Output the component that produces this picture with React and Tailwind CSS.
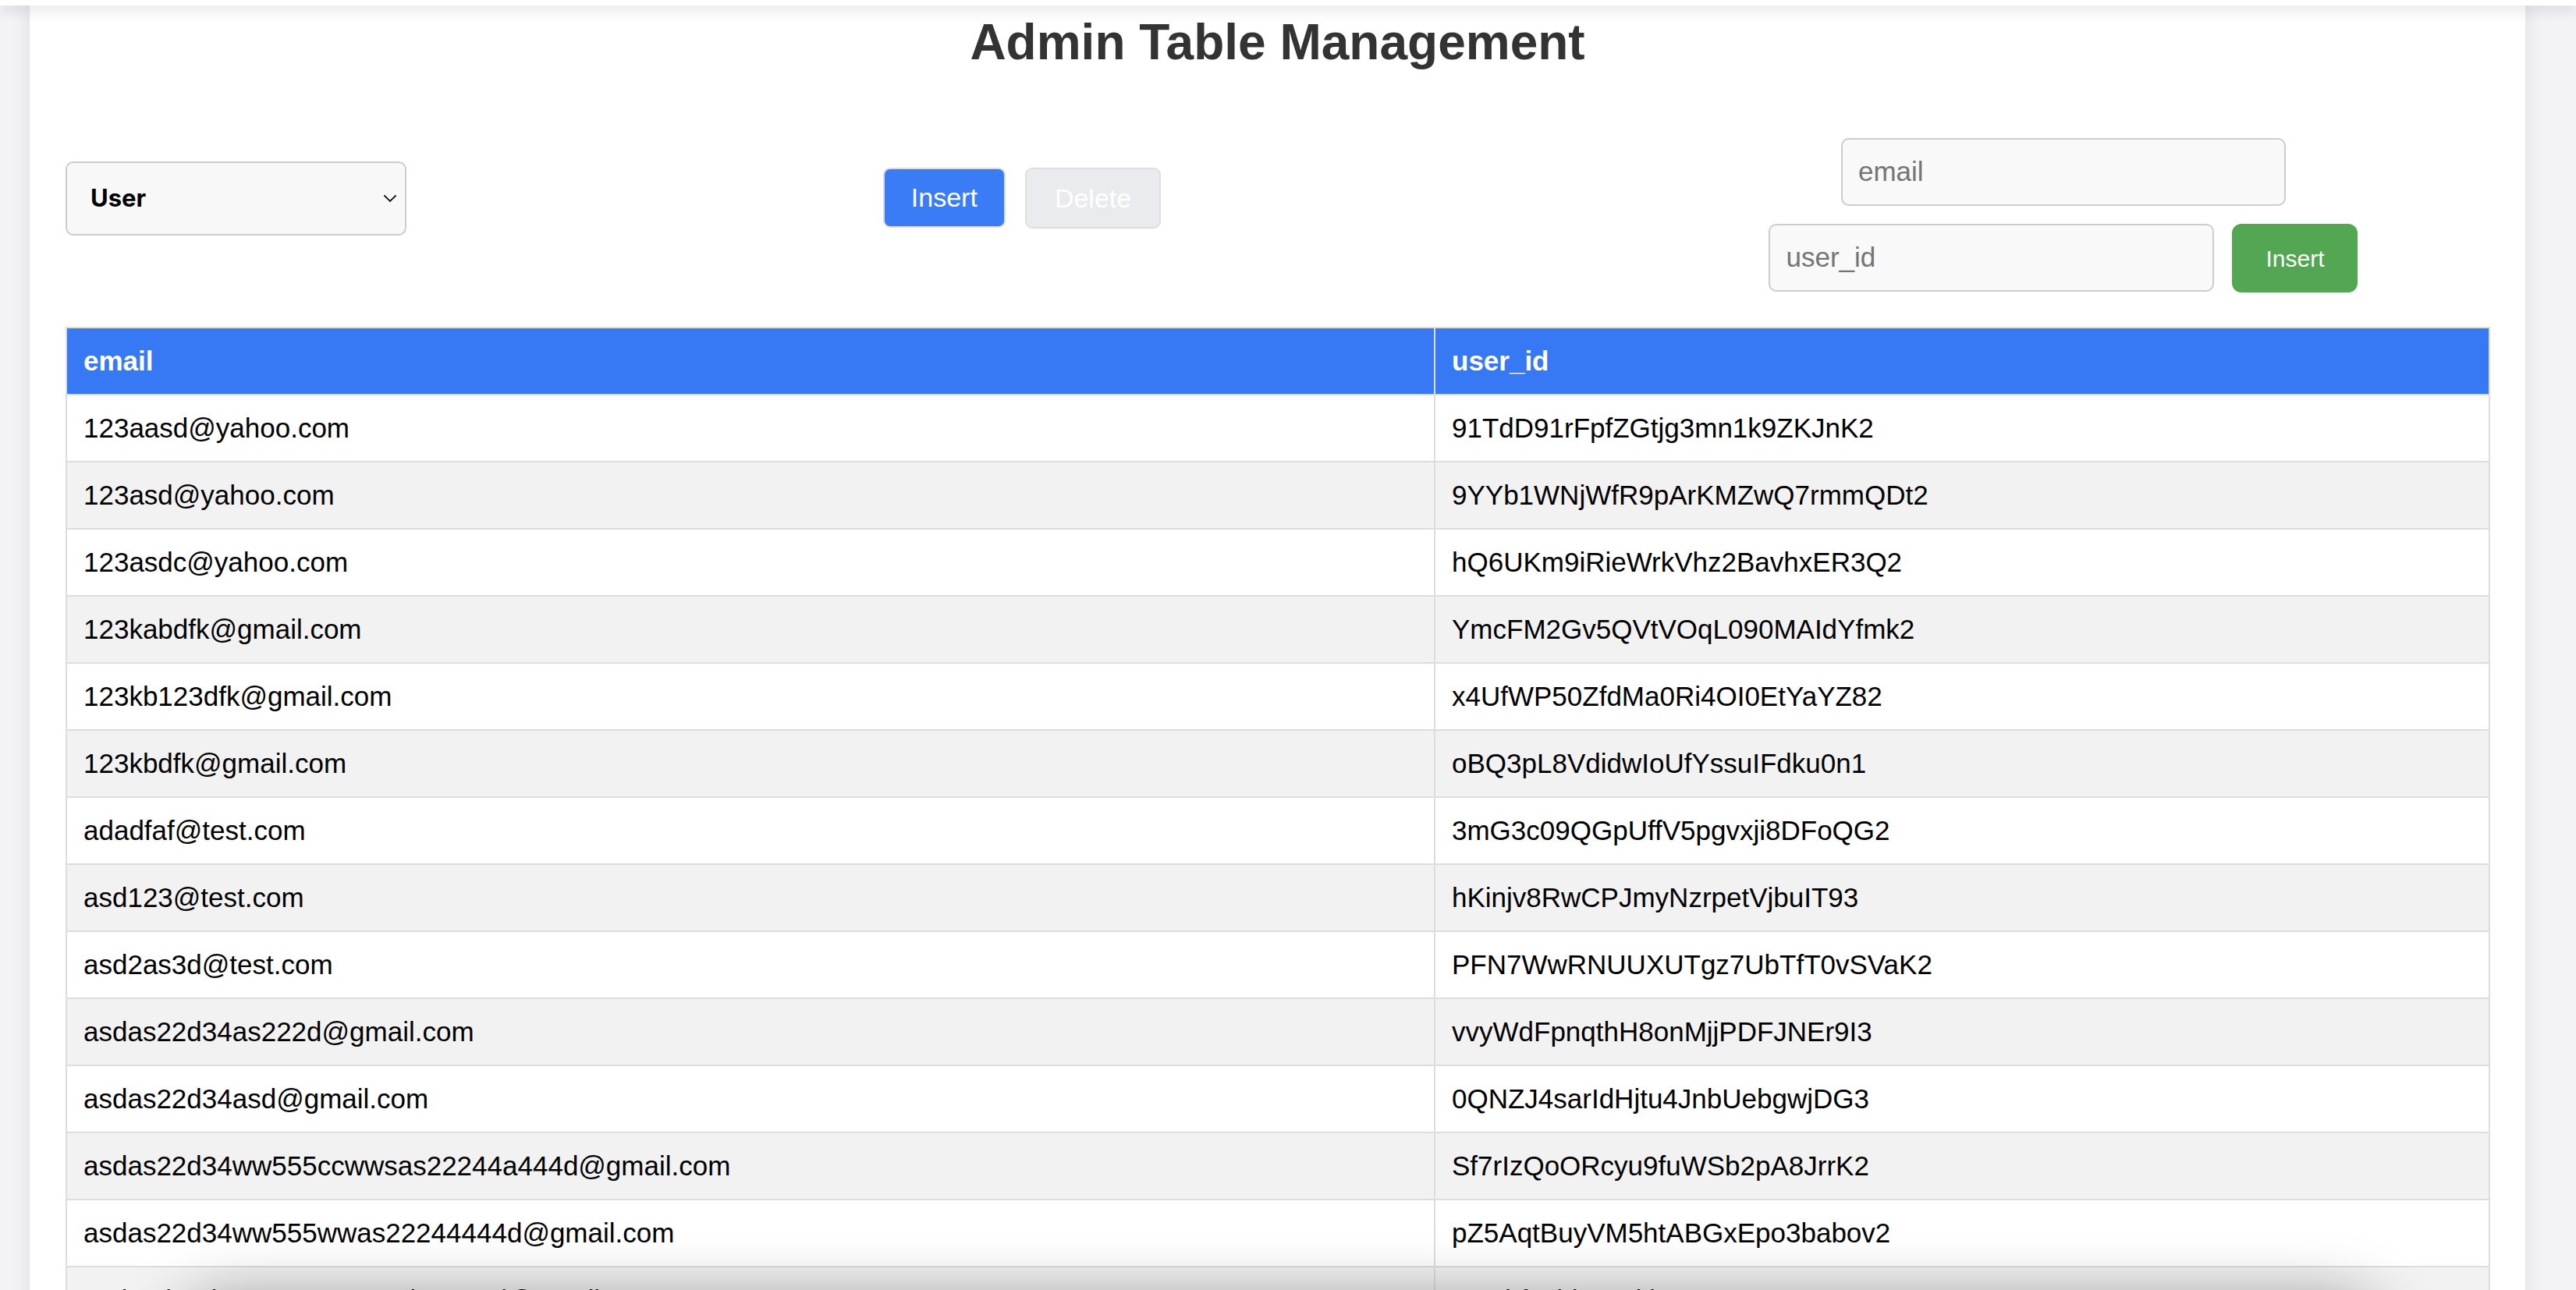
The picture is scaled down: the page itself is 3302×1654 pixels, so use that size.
import React from "react";

const rows = [
  ["123aasd@yahoo.com", "91TdD91rFpfZGtjg3mn1k9ZKJnK2"],
  ["123asd@yahoo.com", "9YYb1WNjWfR9pArKMZwQ7rmmQDt2"],
  ["123asdc@yahoo.com", "hQ6UKm9iRieWrkVhz2BavhxER3Q2"],
  ["123kabdfk@gmail.com", "YmcFM2Gv5QVtVOqL090MAIdYfmk2"],
  ["123kb123dfk@gmail.com", "x4UfWP50ZfdMa0Ri4OI0EtYaYZ82"],
  ["123kbdfk@gmail.com", "oBQ3pL8VdidwIoUfYssuIFdku0n1"],
  ["adadfaf@test.com", "3mG3c09QGpUffV5pgvxji8DFoQG2"],
  ["asd123@test.com", "hKinjv8RwCPJmyNzrpetVjbuIT93"],
  ["asd2as3d@test.com", "PFN7WwRNUUXUTgz7UbTfT0vSVaK2"],
  ["asdas22d34as222d@gmail.com", "vvyWdFpnqthH8onMjjPDFJNEr9I3"],
  ["asdas22d34asd@gmail.com", "0QNZJ4sarIdHjtu4JnbUebgwjDG3"],
  ["asdas22d34ww555ccwwsas22244a444d@gmail.com", "Sf7rIzQoORcyu9fuWSb2pA8JrrK2"],
  ["asdas22d34ww555wwas22244444d@gmail.com", "pZ5AqtBuyVM5htABGxEpo3babov2"],
  ["asdasd22d34ww555wwasd22244d@gmail.com", "TEBhf6xhkVzXkhIPTNDzVaE5WtzT2"],
];

export default function App() {
  return (
    <div className="relative h-[1654px] w-[3302px] overflow-hidden bg-[#f2f2f7] font-['Liberation_Sans',Arial,sans-serif]">
      {/* top bar */}
      <div className="absolute left-0 top-0 z-20 h-[7px] w-full bg-white shadow-[0_4px_18px_rgba(0,0,0,0.2)]" />

      {/* panel */}
      <div className="ml-[38px] min-h-full w-[3199px] bg-white px-[46px] pt-[17px] shadow-[0_0_24px_rgba(0,0,0,0.09)]">
        <h1 className="text-center text-[64px] font-bold leading-[74px] text-[#333333]">
          Admin Table Management
        </h1>

        <div className="mt-[86px] flex items-start justify-between">
          {/* select */}
          <div className="mt-[30px] flex h-[95px] w-[437px] items-center justify-between rounded-[10px] border-2 border-[#cccccc] bg-[#f8f8f8] pl-[30px] pr-[9px]">
            <span className="font-['Inter',sans-serif] text-[31px] font-bold text-black">User</span>
            <svg width="18" height="11" viewBox="0 0 18 11" className="mr-[1px]">
              <path d="M1.5 1.5 L9 9 L16.5 1.5" fill="none" stroke="#111" strokeWidth="1.8" />
            </svg>
          </div>

          {/* buttons */}
          <div className="mt-[38px] flex gap-[25px]">
            <button className="h-[77px] rounded-[9px] border-2 border-[#dcdcdc] bg-[#3a7cf6] px-[34px] text-[34px] leading-[39px] text-white">
              Insert
            </button>
            <button className="h-[78px] rounded-[9px] border-2 border-[#dedede] bg-[#e9ebee] px-[36px] text-[34px] leading-[39px] text-white">
              Delete
            </button>
          </div>

          {/* form */}
          <div className="flex w-[1092px] flex-wrap justify-center gap-[23px]">
            <div className="flex h-[87px] w-[570px] items-center rounded-[10px] border-2 border-[#cccccc] bg-[#f9f9f9] px-[20px] text-[35px] text-[#757575]">
              email
            </div>
            <div className="flex h-[87px] w-[571px] items-center rounded-[10px] border-2 border-[#cccccc] bg-[#f9f9f9] px-[20px] text-[35px] text-[#757575]">
              user_id
            </div>
            <button className="h-[88px] w-[161px] rounded-[12px] bg-[#53a652] text-[30px] text-white">
              Insert
            </button>
          </div>
        </div>

        <table className="mt-[44px] w-[3108px] table-fixed border-collapse text-[35px] leading-[40px] text-black">
          <thead>
            <tr className="bg-[#3779f5] text-white">
              <th className="w-[1754px] border-2 border-[#dddddd] px-[21px] py-[22px] text-left font-bold">email</th>
              <th className="border-2 border-[#dddddd] px-[21px] py-[22px] text-left font-bold">user_id</th>
            </tr>
          </thead>
          <tbody>
            {rows.map(([email, id], i) => (
              <tr key={email} className={i % 2 === 0 ? "bg-white" : "bg-[#f2f2f2]"}>
                <td className="whitespace-nowrap border-2 border-[#dddddd] px-[21px] py-[22px]">{email}</td>
                <td className="whitespace-nowrap border-2 border-[#dddddd] px-[21px] py-[22px]">{id}</td>
              </tr>
            ))}
          </tbody>
        </table>
      </div>

      {/* bottom floating shadow */}
      <div className="pointer-events-none absolute left-[230px] right-[250px] top-[1680px] h-[120px] rounded-full bg-white shadow-[0_-14px_80px_rgba(0,0,0,0.38)]" />
    </div>
  );
}
